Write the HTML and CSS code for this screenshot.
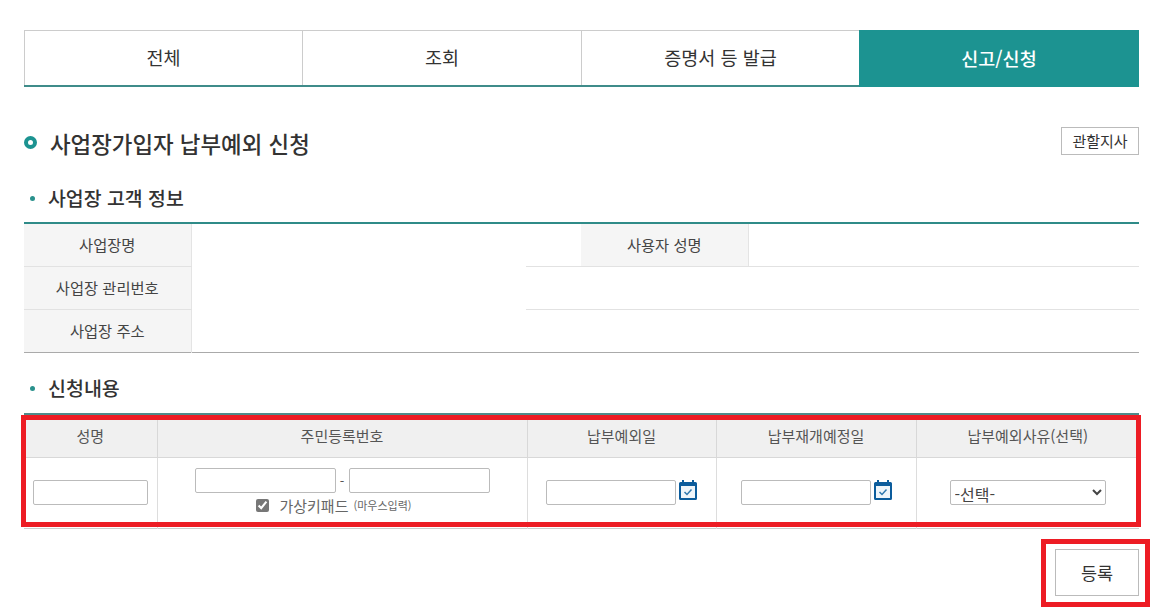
FILE: index.html
```html
<!DOCTYPE html>
<html lang="ko">
<head>
  <meta charset="UTF-8">
  <title>사업장가입자 납부예외 신청</title>
  <meta name="viewport" content="width=device-width, initial-scale=1.0">
  <link rel="stylesheet" href="styles.css">
</head>

<body>
  <div class="container">
    <div class="tabs">
      <a class="tab">전체</a>
      <a class="tab">조회</a>
      <a class="tab">증명서 등 발급</a>
      <a class="tab active">신고/신청</a>
    </div>

    <div class="title-row">
      <h1><span class="ring"></span>사업장가입자 납부예외 신청</h1>
      <button class="btn-small" type="button">관할지사</button>
    </div>

    <h2><span class="dot"></span>사업장 고객 정보</h2>
    <div class="info-wrap">
      <table class="info">
        <colgroup>
          <col class="c-th"><col class="c-td"><col class="c-th2"><col>
        </colgroup>
        <tr>
          <th>사업장명</th><td></td><th>사용자 성명</th><td></td>
        </tr>
        <tr>
          <th>사업장 관리번호</th><td colspan="3"></td>
        </tr>
        <tr>
          <th>사업장 주소</th><td colspan="3"></td>
        </tr>
      </table>
      <div class="mask"></div>
    </div>

    <h2 class="second"><span class="dot"></span>신청내용</h2>
    <div class="apply-wrap">
      <table class="apply">
        <colgroup>
          <col class="a1"><col class="a2"><col class="a3"><col class="a4"><col>
        </colgroup>
        <tr>
          <th>성명</th><th>주민등록번호</th><th>납부예외일</th><th>납부재개예정일</th><th>납부예외사유(선택)</th>
        </tr>
        <tr>
          <td><input class="in-name" type="text"></td>
          <td>
            <div class="jumin">
              <input class="in-jumin" type="text"><span class="dash">-</span><input class="in-jumin" type="text">
            </div>
            <label class="keypad">
              <input type="checkbox" checked>
              <span>가상키패드</span> <small>(마우스입력)</small>
            </label>
          </td>
          <td>
            <div class="date">
              <input class="in-date" type="text">
              <svg class="cal" viewBox="0 0 18 20" width="18" height="20">
                <path fill="#0b5c9c" d="M3 0h2v2h8V0h2v2h1.5A1.5 1.5 0 0 1 18 3.5v15a1.5 1.5 0 0 1-1.500 1.500h-15A1.500 1.500 0 0 1 0 18.500v-15A1.500 1.500 0 0 1 1.500 2H3z"/>
                <rect x="2" y="6" width="14" height="12" fill="#eef5fa"/>
                <path fill="none" stroke="#2f78ae" stroke-width="1.500" d="M5.500 12l2.500 2.500 4.500-5"/>
              </svg>
            </div>
          </td>
          <td>
            <div class="date">
              <input class="in-date" type="text">
              <svg class="cal" viewBox="0 0 18 20" width="18" height="20">
                <path fill="#0b5c9c" d="M3 0h2v2h8V0h2v2h1.5A1.5 1.5 0 0 1 18 3.5v15a1.5 1.5 0 0 1-1.500 1.500h-15A1.500 1.500 0 0 1 0 18.500v-15A1.500 1.500 0 0 1 1.500 2H3z"/>
                <rect x="2" y="6" width="14" height="12" fill="#eef5fa"/>
                <path fill="none" stroke="#2f78ae" stroke-width="1.500" d="M5.500 12l2.500 2.500 4.500-5"/>
              </svg>
            </div>
          </td>
          <td>
            <select class="in-select">
              <option>-선택-</option>
            </select>
          </td>
        </tr>
      </table>
      <div class="red-box"></div>
    </div>

    <div class="actions">
      <button class="btn-submit" type="button">등록</button>
      <div class="red-box-btn"></div>
    </div>
  </div>
</body>
</html>
```

FILE: styles.css
```css
body {
  margin: 0;
  font-family: "Noto Sans CJK KR", "Noto Sans", sans-serif;
  background-color: #ffffff;
  color: #333;
}

.container {
  width: 1115px;
  min-height: 613px;
  box-sizing: border-box;
  margin-left: 24px;
  padding-top: 30px;
}

/* tabs */
.tabs {
  display: flex;
  height: 57px;
  box-sizing: border-box;
  border-top: 1px solid #ccc;
  border-bottom: 2px solid #3f8c8a;
}

.tab {
  flex: 0 0 278px;
  display: flex;
  align-items: center;
  justify-content: center;
  box-sizing: border-box;
  padding-bottom: 2px;
  border-left: 1px solid #ccc;
  font-size: 18.5px;
  color: #333;
}

.tab:nth-child(2) {
  flex-basis: 279px;
}

.tab:last-child {
  flex: 1;
}

.tab.active {
  background-color: #1c9391;
  color: #fff;
  font-weight: 500;
  border-left: 0;
  margin-top: -1px;
  margin-bottom: -2px;
}

/* headings */
.title-row {
  display: flex;
  align-items: center;
  justify-content: space-between;
  height: 28px;
  margin-top: 40px;
}

h1 {
  display: flex;
  align-items: center;
  margin: 0;
  padding-top: 3px;
  font-size: 22.4px;
  font-weight: 500;
  color: #333;
}

.ring {
  width: 13px;
  height: 13px;
  box-sizing: border-box;
  border: 4px solid #1c9391;
  border-radius: 50%;
  margin-right: 13px;
}

.btn-small {
  width: 78px;
  height: 28px;
  padding: 0 0 2px;
  background: #fff;
  border: 1px solid #bbb;
  font-family: inherit;
  font-size: 15px;
  color: #333;
}

h2 {
  display: flex;
  align-items: center;
  height: 26px;
  box-sizing: border-box;
  padding-bottom: 2px;
  margin: 30px 0 11px;
  font-size: 19.400px;
  font-weight: 500;
  color: #333;
}

h2.second {
  margin: 22px 0 12px;
  font-size: 19.500px;
}

.dot {
  width: 5px;
  height: 5px;
  background-color: #2a918c;
  border-radius: 50%;
  margin: 2px 13px 0 6px;
}

/* tables */
table {
  width: 100%;
  border-collapse: collapse;
  table-layout: fixed;
}

.info-wrap,
.apply-wrap,
.actions {
  position: relative;
}

.info {
  border-top: 2px solid #2f8b88;
  border-bottom: 1px solid #aaa;
  font-size: 15.300px;
}

.info th,
.info td {
  height: 42px;
  padding: 0;
  border-bottom: 1px solid #e2e2e2;
}

.info th {
  height: 40px;
  padding-bottom: 2px;
  background-color: #f5f5f5;
  font-weight: 400;
  color: #444;
  border-right: 1px solid #e4e4e4;
}

.info tr:last-child th,
.info tr:last-child td {
  border-bottom: 0;
}

.c-th { width: 167px; }
.c-td { width: 390px; }
.c-th2 { width: 167px; }

/* blanked out values */
.mask {
  position: absolute;
  left: 168px;
  top: 2px;
  width: 334px;
  height: 86px;
  background-color: #fff;
}

.apply {
  border-top: 2px solid #4f8b8a;
  border-bottom: 1px solid #ccc;
  font-size: 15px;
}

.apply th {
  height: 40px;
  padding: 0 0 2px;
  background-color: #f0f0f0;
  font-weight: 400;
  color: #555;
  border-bottom: 1px solid #d8d8d8;
  border-right: 1px solid #d8d8d8;
}

.apply td {
  height: 68px;
  padding: 0 0 2px;
  text-align: center;
  border-right: 1px solid #ddd;
}

.apply th:last-child,
.apply td:last-child {
  border-right: 0;
}

.a1 { width: 133px; }
.a2 { width: 370px; }
.a3 { width: 189px; }
.a4 { width: 200px; }

/* form */
input[type="text"],
select {
  height: 25px;
  box-sizing: border-box;
  background: #fff;
  border: 1px solid #bbb;
  border-radius: 2px;
  font-family: inherit;
  color: #444;
}

.in-name {
  display: block;
  width: 115px;
  margin-left: 9px;
}

.jumin {
  display: flex;
  justify-content: center;
  align-items: center;
  margin-top: 2px;
}

.in-jumin {
  width: 141px;
}

.dash {
  width: 13px;
  font-size: 13px;
  color: #555;
}

.keypad {
  display: flex;
  align-items: center;
  justify-content: center;
  height: 20px;
  margin-top: 2px;
  margin-bottom: 3px;
  padding-right: 16px;
  font-size: 15px;
  color: #666;
}

.keypad input {
  width: 13px;
  height: 13px;
  margin: 0 10px 0 0;
  accent-color: #777;
}

.keypad small {
  margin-left: 5px;
  font-size: 11px;
}

.date {
  display: flex;
  align-items: center;
  justify-content: center;
}

.in-date {
  width: 130px;
}

.cal {
  margin: -4px 0 0 3px;
}

.in-select {
  display: block;
  width: 156px;
  margin-left: 33px;
  padding-left: 0;
  font-size: 16px;
}

/* buttons */
.actions {
  display: flex;
  justify-content: flex-end;
  margin-top: 20px;
}

.btn-submit {
  width: 84px;
  height: 47px;
  padding: 0;
  background: #fff;
  border: 1px solid #bbb;
  font-family: inherit;
  font-size: 17.500px;
  color: #333;
}

/* red annotation boxes */
.red-box {
  position: absolute;
  left: -3px;
  top: 2px;
  width: 1120px;
  height: 112px;
  box-sizing: border-box;
  border: 5px solid #ed1c24;
}

.red-box-btn {
  position: absolute;
  right: -11px;
  top: -10px;
  width: 109px;
  height: 68px;
  box-sizing: border-box;
  border: 5px solid #ed1c24;
}
```
